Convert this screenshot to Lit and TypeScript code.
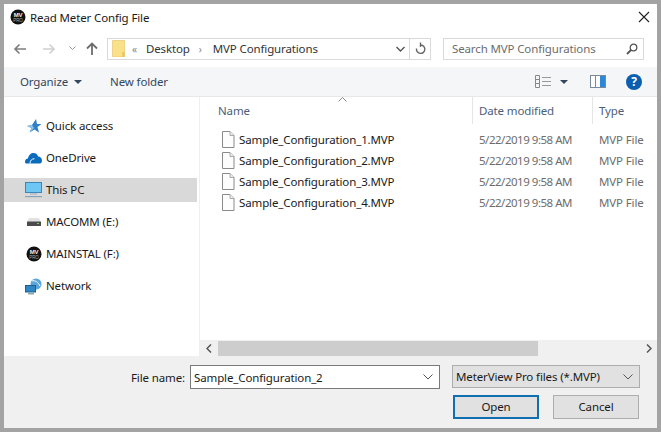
import { LitElement, html, css, svg } from "lit";
import { customElement } from "lit/decorators.js";

const meterLogo = svg`<svg width="16" height="16" viewBox="0 0 16 16"><circle cx="8" cy="8" r="7.500" fill="#111"/><text x="8" y="8" text-anchor="middle" font-family="Liberation Sans" font-weight="700" font-size="6" fill="#eee">MV</text><text x="8" y="12.500" text-anchor="middle" font-family="Liberation Sans" font-size="4.500" fill="#aaa">PRO</text></svg>`;
const fileIcon = svg`<svg width="14" height="17" viewBox="0 0 14 17"><path d="M1.500 .5H9L13 4.500V16.500H1.500Z" fill="#fdfdfd" stroke="#8a8a8a"/><path d="M9 .5V4.500H13" fill="#eee" stroke="#a8a8a8"/></svg>`;
const chev = svg`<svg width="10" height="6" viewBox="0 0 10 6"><path d="M.5 .5L5 5L9.500 .5" fill="none" stroke="#555"/></svg>`;

const navIcons: Record<string, unknown> = {
  star: svg`<svg width="16" height="16" viewBox="0 0 16 16"><path d="M10 1L11 6H15.500L11.500 9L13 14.500L8.500 11.500L3.500 14.500L5.500 10L1 8L6 7Z" fill="#2f7fc9"/><path d="M1 8L6 7L8 10L3.500 14.500L5.500 10Z" fill="#8fc4ee"/></svg>`,
  cloud: svg`<svg width="17" height="12" viewBox="0 0 17 12"><path d="M0 10C0 7.500 1.500 6.500 3 6.500C3.500 3 6 1 8.500 1C11 1 12.500 2.500 13 4.500C15.500 4.500 17 6.500 17 8.500C17 10.500 16 11.500 15 11.500H2C.8 11.500 0 11 0 10Z" fill="#0b6cbd"/><path d="M5 11.500C5 8.500 7 6.500 9.500 6.800" fill="none" stroke="#fff"/></svg>`,
  pc: svg`<svg width="17" height="16" viewBox="0 0 17 16"><rect x=".5" y=".5" width="16" height="10" fill="#6ec6f5" stroke="#3c87b8"/><rect x="5" y="11" width="7" height="2" fill="#b9c4cc"/><rect y="14" width="17" height="1.200" fill="#88a5b8"/></svg>`,
  drive: svg`<svg width="14" height="8" viewBox="0 0 14 8"><path d="M2 0H12L14 4H0Z" fill="#e2e2e2"/><rect y="3.500" width="14" height="4.500" rx=".5" fill="#4b4b4b"/><rect x="10" y="5" width="2" height="1" fill="#6fd06f"/></svg>`,
  logo: meterLogo,
  net: svg`<svg width="17" height="17" viewBox="0 0 17 17"><circle cx="11" cy="6" r="5.500" fill="#5aa5dc"/><path d="M7 3C10 2 13 4 15 8" stroke="#fff" fill="none"/><rect x=".5" y="7.500" width="10" height="6.500" fill="#2f86c5" stroke="#1f5f90"/><rect x="3" y="15" width="6" height="1.500" fill="#8aa"/></svg>`,
};

const places = [
  ["star", "Quick access"],
  ["cloud", "OneDrive"],
  ["pc", "This PC"],
  ["drive", "MACOMM (E:)"],
  ["logo", "MAINSTAL (F:)"],
  ["net", "Network"],
];
const files = [1, 2, 3, 4];

@customElement("app-root")
export class AppRoot extends LitElement {
  static styles = css`
    :host { display: block; width: 661px; height: 432px; box-sizing: border-box; border: 4px solid #a3a3a3; background: #fff;
      font: 11.5px "Noto Sans", "Open Sans", sans-serif; letter-spacing: -0.13px; color: #1a1a1a; overflow: hidden; }
    .dialog { display: flex; flex-direction: column; height: 424px; }
    .title { height: 26px; display: flex; align-items: center; padding: 0 7px 0 6px; gap: 4px; flex: none; }
    .title span { flex: 1; }
    .nav { height: 37px; flex: none; display: flex; align-items: center; padding: 0 13px 0 9px; box-sizing: border-box; }
    .navbtns { width: 94px; display: flex; align-items: center; }
    .navbtns svg { display: block; }
    .addr { width: 324px; height: 22px; box-sizing: border-box; border: 1px solid #d9d9d9; display: flex; align-items: center; padding-left: 4px; color: #333; }
    .crumb { margin-left: 9px; }
    .sep { margin-left: 9px; color: #888; font-size: 10px; }
    .sep.mid { margin-right: 2px; }
    .grow { flex: 1; }
    .refresh { width: 20px; height: 100%; border-left: 1px solid #d9d9d9; display: flex; align-items: center; justify-content: center; }
    .search { margin-left: 12px; width: 201px; height: 22px; box-sizing: border-box; border: 1px solid #d9d9d9; display: flex; align-items: center; justify-content: space-between; padding: 0 5px 0 8px; color: #6d6d6d; }
    .toolbar { height: 30px; flex: none; background: #f5f6f7; border-bottom: 1px solid #e8e8e8; box-sizing: border-box; display: flex; align-items: center; padding: 0 15px 0 16px; color: #33475f; }
    .caret { width: 0; height: 0; border: 4px solid transparent; border-top: 4px solid #33475f; border-bottom: 0; margin-left: 6px; }
    .newf { margin-left: 28px; }
    .tools { margin-left: auto; display: flex; align-items: center; }
    .help { width: 16px; height: 16px; border-radius: 50%; background: #0a5fb0; color: #fff; font-weight: 700; font-size: 12px; line-height: 16px; text-align: center; margin-left: 20px; }
    .main { flex: 1; display: flex; min-height: 0; }
    .side { width: 195px; flex: none; border-right: 1px solid #efefef; padding-top: 17px; display: flex; flex-direction: column; gap: 8px; box-sizing: content-box; }
    .place { height: 24px; width: 193px; display: flex; align-items: center; color: #1a1a1a; }
    .place.on { background: #d9d9d9; }
    .pl { padding-bottom: 2px; }
    .pi { width: 17px; display: flex; justify-content: center; margin-left: 21px; margin-right: 4px; }
    .list { flex: 1; min-width: 0; display: flex; flex-direction: column; position: relative; }
    .cols { height: 27px; display: grid; grid-template-columns: 273px 120px 1fr; color: #4c607a; flex: none; }
    .cols div { display: flex; align-items: center; padding-left: 6px; border-right: 1px solid #e5e5e5; }
    .cols div:first-child { padding-left: 18px; }
    .cols div:last-child { border: 0; }
    .sort { position: absolute; left: 138px; top: 0; }
    .rows { flex: 1; padding-top: 5px; }
    .row { height: 21px; display: grid; grid-template-columns: 279px 120px 1fr; align-items: center; overflow: hidden; white-space: nowrap; color: #6d6d6d; }
    .date { letter-spacing: -0.48px; }
    .name { display: flex; align-items: center; gap: 4px; padding-left: 21px; color: #1a1a1a; }
    .hs { height: 16px; background: #f0f0f0; display: flex; align-items: center; flex: none; }
    .thumb { width: 320px; height: 15px; background: #cdcdcd; margin-left: 1px; }
    .arrow { width: 17px; display: flex; justify-content: center; }
    .foot { height: 72px; flex: none; background: #f0f0f0; display: grid; grid-template-columns: 181px 250px 188px; grid-template-rows: 24px 24px; column-gap: 5px; row-gap: 6px; padding-top: 9px; box-sizing: border-box; align-items: center; }
    .lab { text-align: right; }
    .input { height: 24px; box-sizing: border-box; border: 1px solid #7a7a7a; background: #fff; display: flex; align-items: center; justify-content: space-between; padding: 0 6px 0 3px; }
    .combo { height: 23px; box-sizing: border-box; border: 1px solid #adadad; background: #e1e1e1; display: flex; align-items: center; justify-content: space-between; padding: 0 6px 0 3px; margin-left: 7px; width: 188px; align-self: start; }
    .btns { grid-column: 3; display: flex; gap: 14px; margin-left: 8px; }
    .btn { width: 86px; height: 24px; flex: none; box-sizing: border-box; border: 1px solid #adadad; background: #e1e1e1; display: flex; align-items: center; justify-content: center; padding-bottom: 1px; }
    .btn.def { border: 2px solid #0f6fb0; }
  `;

  render() {
    return html`<div class="dialog">
      <div class="title">${meterLogo}<span>Read Meter Config File</span>
        <svg width="12" height="12" viewBox="0 0 12 12"><path d="M1 1L11 11M11 1L1 11" stroke="#222" stroke-width="1.100"/></svg></div>
      <div class="nav">
        <div class="navbtns">
          <svg width="14" height="12" viewBox="0 0 14 12"><path d="M13 6H2M6.500 1.500L2 6L6.500 10.500" fill="none" stroke="#7d7d7d" stroke-width="1.600"/></svg>
          <svg style="margin-left:15px" width="14" height="12" viewBox="0 0 14 12"><path d="M1 6H12M7.500 1.500L12 6L7.500 10.500" fill="none" stroke="#d0d0d0" stroke-width="1.600"/></svg>
          <svg style="margin-left:13px" width="7" height="5" viewBox="0 0 7 5"><path d="M.5 .5L3.500 3.500L6.500 .5" fill="none" stroke="#999"/></svg>
          <svg style="margin-left:10px" width="12" height="13" viewBox="0 0 12 13"><path d="M6 13V2M1 6.500L6 1.500L11 6.500" fill="none" stroke="#6d6d6d" stroke-width="1.800"/></svg>
        </div>
        <div class="addr">
          <svg width="13" height="17" viewBox="0 0 13 17"><path d="M.5 .5H12.500V17H.5Z" fill="#fbe08a" stroke="#e0c060" stroke-width=".6"/><path d="M10 12H13V17H10Z" fill="#e8c868"/></svg>
          <span class="sep" style="margin-left:7px">«</span><span class="crumb">Desktop</span><span class="sep mid">›</span><span class="crumb">MVP Configurations</span>
          <span class="grow"></span>
          <svg style="margin-right:4px" width="9" height="6" viewBox="0 0 9 6"><path d="M.5 1L4.500 5L8.500 1" fill="none" stroke="#555" stroke-width="1.400"/></svg>
          <div class="refresh"><svg width="11" height="13" viewBox="0 0 11 13"><path d="M5.500 3A4.200 4.200 0 1 1 1.500 6.500M5.500 .5V5" fill="none" stroke="#666" stroke-width="1.400"/></svg></div>
        </div>
        <div class="search"><span>Search MVP Configurations</span>
          <svg width="12" height="12" viewBox="0 0 12 12"><circle cx="7.500" cy="4.500" r="3.300" fill="none" stroke="#555" stroke-width="1.300"/><path d="M5 7L1 11" stroke="#555" stroke-width="1.800"/></svg></div>
      </div>
      <div class="toolbar"><span>Organize</span><i class="caret"></i><span class="newf">New folder</span>
        <div class="tools">
          <svg width="16" height="13" viewBox="0 0 16 13"><path d="M.5 .5H4.500V12.500H.5ZM.5 4.500H4.500M.5 8.500H4.500" fill="none" stroke="#888"/><path d="M7 2.500H16M7 6.500H16M7 10.500H16" stroke="#999"/></svg>
          <i class="caret" style="margin-left:9px"></i>
          <svg style="margin-left:22px" width="16" height="13" viewBox="0 0 16 13"><rect x=".5" y=".5" width="15" height="12" fill="#fff" stroke="#7a8a99"/><rect x="10" y="1" width="5" height="11" fill="#2f86d6"/><path d="M5.500 1V12" stroke="#7a8a99"/></svg>
          <div class="help">?</div>
        </div>
      </div>
      <div class="main">
        <div class="side">
          ${places.map(([i, t]) => html`<div class="place ${t === "This PC" ? "on" : ""}"><span class="pi">${navIcons[i]}</span><span class="pl">${t}</span></div>`)}
        </div>
        <div class="list">
          <svg class="sort" width="9" height="5" viewBox="0 0 9 5"><path d="M.5 4.500L4.500 .5L8.500 4.500" fill="none" stroke="#888"/></svg>
          <div class="cols"><div>Name</div><div>Date modified</div><div>Type</div></div>
          <div class="rows">
            ${files.map((n) => html`<div class="row"><div class="name">${fileIcon}<span>Sample_Configuration_${n}.MVP</span></div><div class="date">5/22/2019 9:58 AM</div><div>MVP File</div></div>`)}
          </div>
          <div class="hs">
            <span class="arrow"><svg width="6" height="9" viewBox="0 0 6 9"><path d="M5 .5L1 4.500L5 8.500" fill="none" stroke="#555" stroke-width="1.500"/></svg></span>
            <div class="thumb"></div><span class="grow"></span>
            <span class="arrow"><svg width="6" height="9" viewBox="0 0 6 9"><path d="M1 .5L5 4.500L1 8.500" fill="none" stroke="#555" stroke-width="1.500"/></svg></span>
          </div>
        </div>
      </div>
      <div class="foot">
        <div class="lab">File name:</div>
        <div class="input"><span>Sample_Configuration_2</span>${chev}</div>
        <div class="combo"><span>MeterView Pro files (*.MVP)</span>${chev}</div>
        <div class="btns"><div class="btn def">Open</div><div class="btn">Cancel</div></div>
      </div>
    </div>`;
  }
}
